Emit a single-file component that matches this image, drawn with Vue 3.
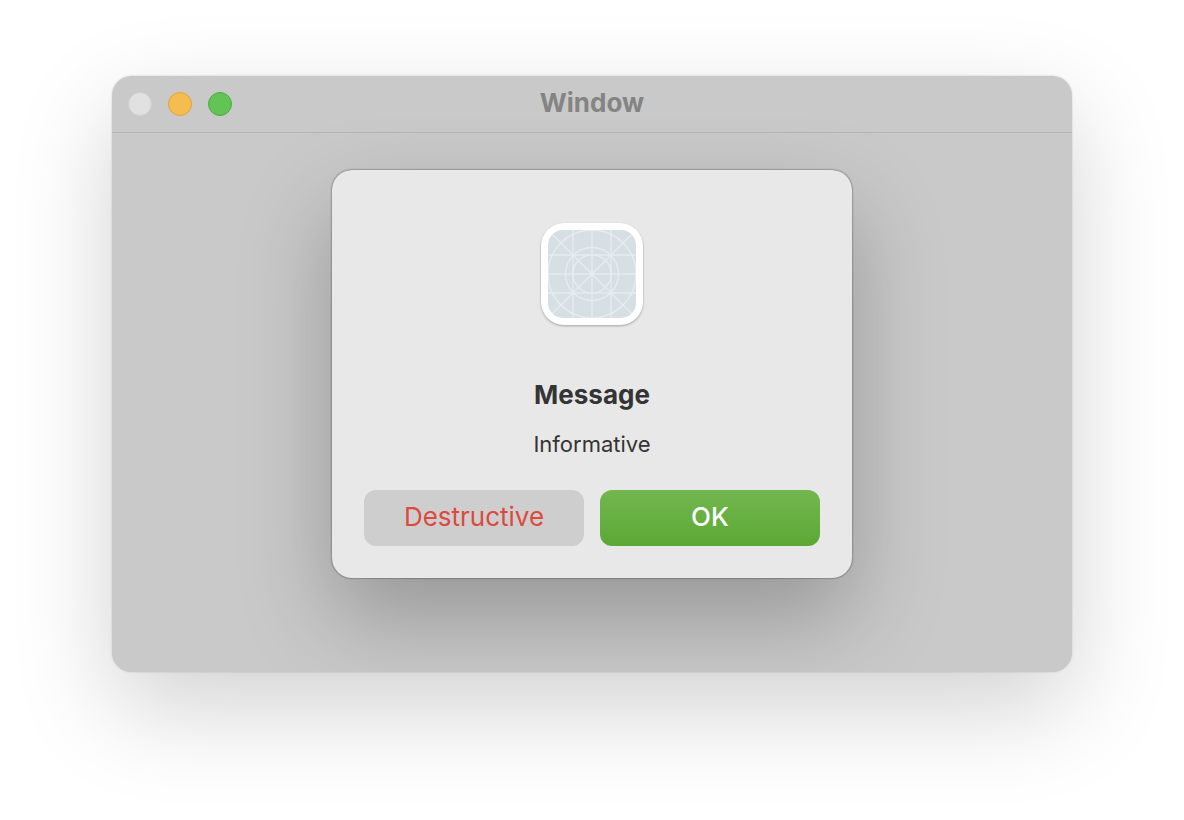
<script setup>
import { ref } from 'vue'

const open = ref(true)
</script>

<template>
  <main class="desktop">
    <section class="window" aria-label="Window">
      <header class="titlebar">
        <div class="lights">
          <button class="light close" type="button" aria-label="Close" disabled></button>
          <button class="light minimize" type="button" aria-label="Minimize"></button>
          <button class="light zoom" type="button" aria-label="Zoom"></button>
        </div>
        <h1 class="title">Window</h1>
      </header>
      <div class="content">
        <div
          v-if="open"
          class="alert"
          role="alertdialog"
          aria-labelledby="alert-message"
          aria-describedby="alert-info"
        >
          <svg class="app-icon" viewBox="0 0 104 104" aria-hidden="true">
            <defs>
              <clipPath id="grid-clip">
                <rect x="8" y="8" width="88" height="88" rx="15" />
              </clipPath>
            </defs>
            <rect x="1" y="1" width="102" height="102" rx="23" fill="#fff" />
            <rect x="8" y="8" width="88" height="88" rx="15" fill="#d5dfe4" />
            <g clip-path="url(#grid-clip)" fill="none" stroke="#e6ecf1" stroke-width="1.4">
              <path d="M33 8V96M52 8V96M71 8V96M8 33H96M8 52H96M8 71H96M8 8L96 96M96 8L8 96" />
              <circle cx="52" cy="52" r="44" />
              <circle cx="52" cy="52" r="26.5" />
              <circle cx="52" cy="52" r="19" />
            </g>
          </svg>
          <h2 id="alert-message" class="message">Message</h2>
          <p id="alert-info" class="info">Informative</p>
          <div class="actions">
            <button class="action destructive" type="button" @click="open = false">Destructive</button>
            <button class="action primary" type="button" @click="open = false">OK</button>
          </div>
        </div>
      </div>
    </section>
  </main>
</template>

<style>
body {
  margin: 0;
  background: #fff;
}
</style>

<style scoped>
.desktop {
  box-sizing: border-box;
  min-height: 100vh;
  padding: 76px 112px 148px;
  display: flex;
  overflow: hidden;
  font-family: Inter, "Liberation Sans", sans-serif;
}

.window {
  flex: 1;
  display: flex;
  flex-direction: column;
  overflow: hidden;
  border-radius: 20px;
  background: #c9c9c9;
  box-shadow: 0 0 2px rgba(0, 0, 0, 0.2), 0 36px 100px rgba(0, 0, 0, 0.18);
}

.titlebar {
  display: grid;
  grid-template-columns: 1fr auto 1fr;
  align-items: center;
  height: 56px;
  padding: 0 16px;
  border-bottom: 1px solid #b5b5b5;
}

.lights {
  display: flex;
  gap: 16px;
}

.light {
  box-sizing: border-box;
  width: 24px;
  height: 24px;
  padding: 0;
  border: 1px solid;
  border-radius: 50%;
}

.close {
  background: #e1e1e1;
  border-color: #d0d0d0;
}

.minimize {
  background: #f5bd4f;
  border-color: #dfa33c;
}

.zoom {
  background: #61c454;
  border-color: #50aa42;
}

.title {
  margin: 0;
  padding-bottom: 2px;
  font-size: 26px;
  line-height: 32px;
  font-weight: 700;
  color: #848484;
}

.content {
  flex: 1;
  display: flex;
  justify-content: center;
  align-items: flex-start;
  padding: 37px 32px;
}

.alert {
  box-sizing: border-box;
  width: 100%;
  max-width: 520px;
  padding: 52px 32px 32px;
  display: flex;
  flex-direction: column;
  align-items: center;
  border-radius: 20px;
  background: #e8e8e8;
  box-shadow: 0 0 2px rgba(0, 0, 0, 0.7), 0 40px 90px rgba(0, 0, 0, 0.25);
}

.app-icon {
  width: 104px;
  height: 104px;
  filter: drop-shadow(0 1px 1px rgba(0, 0, 0, 0.3));
}

.message {
  margin: 53px 0 0;
  font-size: 26px;
  line-height: 32px;
  font-weight: 700;
  color: #343434;
}

.info {
  margin: 19px 0 0;
  font-size: 22px;
  line-height: 28px;
  color: #343434;
}

.actions {
  align-self: stretch;
  display: grid;
  grid-template-columns: 1fr 1fr;
  gap: 16px;
  margin-top: 32px;
}

.action {
  height: 56px;
  padding: 0 16px 2px;
  border: 0;
  border-radius: 12px;
  font-family: inherit;
  font-size: 26px;
  line-height: 32px;
}

.destructive {
  background: #cecece;
  color: #dd4a3d;
}

.primary {
  background: linear-gradient(#73b74f, #5ba835);
  color: #fff;
  font-weight: 500;
}
</style>
